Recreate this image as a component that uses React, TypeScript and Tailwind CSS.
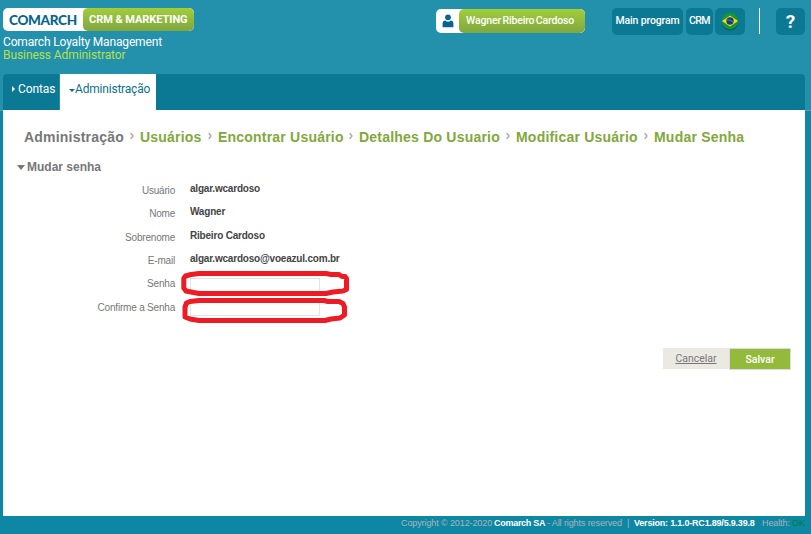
import React from "react";

const CRUMBS = [
  { label: "Administração", width: "w-[100px]", current: true },
  { label: "Usuários", width: "w-[62px]" },
  { label: "Encontrar Usuário", width: "w-[125px]" },
  { label: "Detalhes Do Usuario", width: "w-[141px]" },
  { label: "Modificar Usuário", width: "w-[122px]" },
  { label: "Mudar Senha", width: "w-[92px]" },
];

const FIELDS = [
  { label: "Usuário", value: "algar.wcardoso", height: "h-[23px]" },
  { label: "Nome", value: "Wagner", height: "h-[24px]" },
  { label: "Sobrenome", value: "Ribeiro Cardoso", height: "h-[23px]" },
  { label: "E-mail", value: "algar.wcardoso@voeazul.com.br", height: "h-[23px]" },
];

function Logo() {
  return (
    <div className="flex h-[23px] w-[191px] overflow-hidden rounded-[5px] bg-white">
      <div className="w-[80px] shrink-0 whitespace-nowrap pl-[6px] font-[Lato] text-[13.5px] font-black leading-[24px] tracking-[-0.3px] text-[#07648c]">
        COMARCH
      </div>
      <div className="flex-1 whitespace-nowrap rounded-[5px] bg-linear-to-b from-[#a3cd39] to-[#7fa73f] pl-[6px] font-[Roboto] text-[11px] font-bold leading-[24px] tracking-[-0.05px] text-white">
        CRM &amp; MARKETING
      </div>
    </div>
  );
}

function UserBadge() {
  return (
    <div className="flex h-[24px] w-[149px] overflow-hidden rounded-[5px] bg-white">
      <div className="flex w-[23px] shrink-0 items-center justify-center">
        <svg width="12" height="14" viewBox="0 0 12 14" fill="#07648c">
          <circle cx="6" cy="3.3" r="2.9" />
          <path d="M.6 13.3V9Q.6 6.6 3.2 6.4Q6 9 8.8 6.4Q11.4 6.6 11.4 9V13.3Z" />
        </svg>
      </div>
      <div className="flex-1 whitespace-nowrap rounded-[5px] bg-linear-to-b from-[#a3cd39] to-[#7fa73f] pl-[7px] font-[Roboto] text-[10.5px] font-medium leading-[23px] tracking-[-0.15px] text-white [word-spacing:-1px]">
        Wagner Ribeiro Cardoso
      </div>
    </div>
  );
}

function BrazilFlag() {
  return (
    <svg width="18" height="19" viewBox="0 0 18 19">
      <circle cx="9" cy="10.5" r="8" fill="#075e67" />
      <circle cx="9" cy="9" r="8.2" fill="#159638" />
      <path d="M1 9L9 3.6L17 9L9 14.4Z" fill="#f7dd16" />
      <circle cx="9" cy="9" r="3.7" fill="#193c80" />
      <path d="M6 7.8Q9.5 7.5 12 10" fill="none" stroke="#8fa8c4" strokeWidth=".6" />
    </svg>
  );
}

function MarkerRing({ wide }: { wide?: boolean }) {
  return wide ? (
    <svg className="absolute left-[-9px] top-[-8px]" width="170" height="30" viewBox="0 0 170 30">
      <path d="M10 4.5L18 3.5H145L150 4.5H158L161 6.5H164L165.5 8.5V19.5L162 21L152 22L145 23.5H18L10 22L5 21L2.8 18V8.5L4.5 6L10 4.5Z" fill="none" stroke="#ed1c24" strokeWidth="5" strokeLinejoin="round" />
    </svg>
  ) : (
    <svg className="absolute left-[-9px] top-[-6px]" width="170" height="32" viewBox="0 0 170 32">
      <path d="M9 6.5L18 5.5H143L147 6.5H158L162 8.5L163.5 12V20L159 23L150 24L144 25.5H18L9 24L4 22V12L5.5 8L9 6.5Z" fill="none" stroke="#ed1c24" strokeWidth="5" strokeLinejoin="round" />
    </svg>
  );
}

export default function App() {
  return (
    <div className="flex h-[534px] w-[811px] flex-col overflow-hidden bg-[#0e87a4] font-['Liberation_Sans',sans-serif]">
      <header className="flex h-[111px] shrink-0 flex-col border-b border-[#4aa1b8] bg-[#2390ac] pl-[3px] pr-[6px]">
        <div className="flex h-[74px] items-start pt-[8px]">
          <div className="w-[433px] font-[Roboto]">
            <Logo />
            <div className="mt-[5px] whitespace-nowrap text-[12px] leading-[13px] tracking-[-0.16px] text-white">Comarch Loyalty Management</div>
            <div className="whitespace-nowrap text-[12px] leading-[13px] tracking-[-0.08px] text-[#b5e04a]">Business Administrator</div>
          </div>
          <div className="mt-px"><UserBadge /></div>
          <div className="ml-[27px] flex h-[27px] font-[Roboto] text-[10.5px] font-medium leading-[23px] text-white">
            <button className="w-[71px] whitespace-nowrap rounded-[5px] bg-[#0b7994] tracking-[-0.15px]"><span className="-mt-[3px] block">Main program</span></button>
            <button className="ml-[3px] w-[27px] rounded-[5px] bg-[#0b7994] tracking-[-0.6px]"><span className="-mt-[3px] block">CRM</span></button>
            <button className="ml-[2px] flex w-[30px] items-center justify-center rounded-[5px] bg-[#0b7994]"><BrazilFlag /></button>
            <div className="ml-[14px] h-[26px] w-px bg-white" />
            <button className="ml-[16px] w-[29px] rounded-[5px] bg-[#0b7994] text-[19px] font-bold leading-[27px]">?</button>
          </div>
        </div>
        <nav className="flex h-[36px] rounded-t-[4px] bg-[#0b7994] font-[Roboto] text-[12px] leading-[30px]">
          <div className="flex w-[57px] whitespace-nowrap border-r border-[#2390ac] pl-[9px] tracking-[-0.1px] text-white">
            <svg className="mr-[3px] mt-[12px] shrink-0" width="3" height="6"><path d="M0 0L3 3L0 6Z" fill="white" /></svg>
            Contas
          </div>
          <div className="flex w-[96px] whitespace-nowrap bg-white pl-[9px] tracking-[-0.2px] text-[#0b718b]">
            <svg className="mt-[15px] shrink-0" width="6" height="3"><path d="M0 0H6L3 3Z" fill="#0b718b" /></svg>
            Administração
          </div>
        </nav>
      </header>

      <main className="-mt-px ml-[3px] mr-[6px] h-[406px] shrink-0 bg-white">
        <div className="flex h-[48px] items-center pl-[21px] pt-[6px] text-[14px] font-bold">
          {CRUMBS.map((crumb, i) => (
            <React.Fragment key={crumb.label}>
              {i > 0 && (
                <svg className="mx-[6px] -mt-[3px] shrink-0" width="4" height="6" viewBox="0 0 4 6"><path d="M.7 0L3 3L.7 6" fill="none" stroke="#aaa" strokeWidth="1.4" /></svg>
              )}
              <span className={`${crumb.width} shrink-0 whitespace-nowrap tracking-[0.21px] ${crumb.current ? "text-[#777]" : "text-[#82a83b]"}`}>{crumb.label}</span>
            </React.Fragment>
          ))}
        </div>
        <h2 className="flex h-[18px] items-center pl-[14px] text-[12px] font-bold text-[#777]">
          <svg className="mr-[2px] mt-[1px]" width="8" height="5"><path d="M0 0H8L4 5Z" fill="#777" /></svg>
          Mudar senha
        </h2>
        <div className="pt-[2px] text-[10px] tracking-[-0.2px]">
          {FIELDS.map((field) => (
            <div key={field.label} className={`flex ${field.height}`}>
              <div className="w-[172px] pt-[5px] text-right leading-[16px] text-[#777]">{field.label}</div>
              <div className="ml-[15px] whitespace-nowrap pt-[3px] font-bold leading-[16px] text-[#444]">{field.value}</div>
            </div>
          ))}
          <div className="flex h-[24px]">
            <label className="w-[172px] pt-[5px] text-right leading-[16px] text-[#777]">Senha</label>
            <div className="relative ml-[15px] mt-[7px] h-[15px] w-[130px]">
              <input type="password" className="block h-[15px] w-[130px] border border-[#e3e3e3] bg-white" />
              <MarkerRing wide />
            </div>
          </div>
          <div className="flex h-[24px]">
            <label className="w-[172px] pt-[5px] text-right leading-[16px] text-[#777]">Confirme a Senha</label>
            <div className="relative ml-[15px] mt-[6px] h-[15px] w-[130px]">
              <input type="password" className="block h-[15px] w-[130px] border border-[#e3e3e3] bg-white" />
              <MarkerRing />
            </div>
          </div>
        </div>
        <div className="mt-[29px] flex justify-end pr-[14px] font-[Roboto] text-[10.5px] leading-[21px]">
          <button className="h-[21px] w-[66px] bg-[#eaeae2] text-[#777] underline">Cancelar</button>
          <button className="h-[22px] w-[62px] border border-[#ddd] bg-[#94ba3b] font-medium leading-[19px] text-white">Salvar</button>
        </div>
      </main>

      <footer className="flex h-[18px] whitespace-pre pl-[401px] text-[9px] leading-[14px] tracking-[-0.1px] text-[#acb5b7]">
        <span className="w-[93px] shrink-0">Copyright © 2012-2020</span>
        <span className="w-[53px] shrink-0 font-bold tracking-[-0.28px] text-white">Comarch SA</span>
        <span className="w-[80px] shrink-0">- All rights reserved</span>
        <span className="w-[7px] shrink-0">|</span>
        <span className="w-[128px] shrink-0 font-bold tracking-[-0.2px] text-white">Version: 1.1.0-RC1.89/5.9.39.8</span>
        <span className="w-[30px] shrink-0">Health:</span>
        <span className="text-[#008030]">OK</span>
      </footer>
    </div>
  );
}
